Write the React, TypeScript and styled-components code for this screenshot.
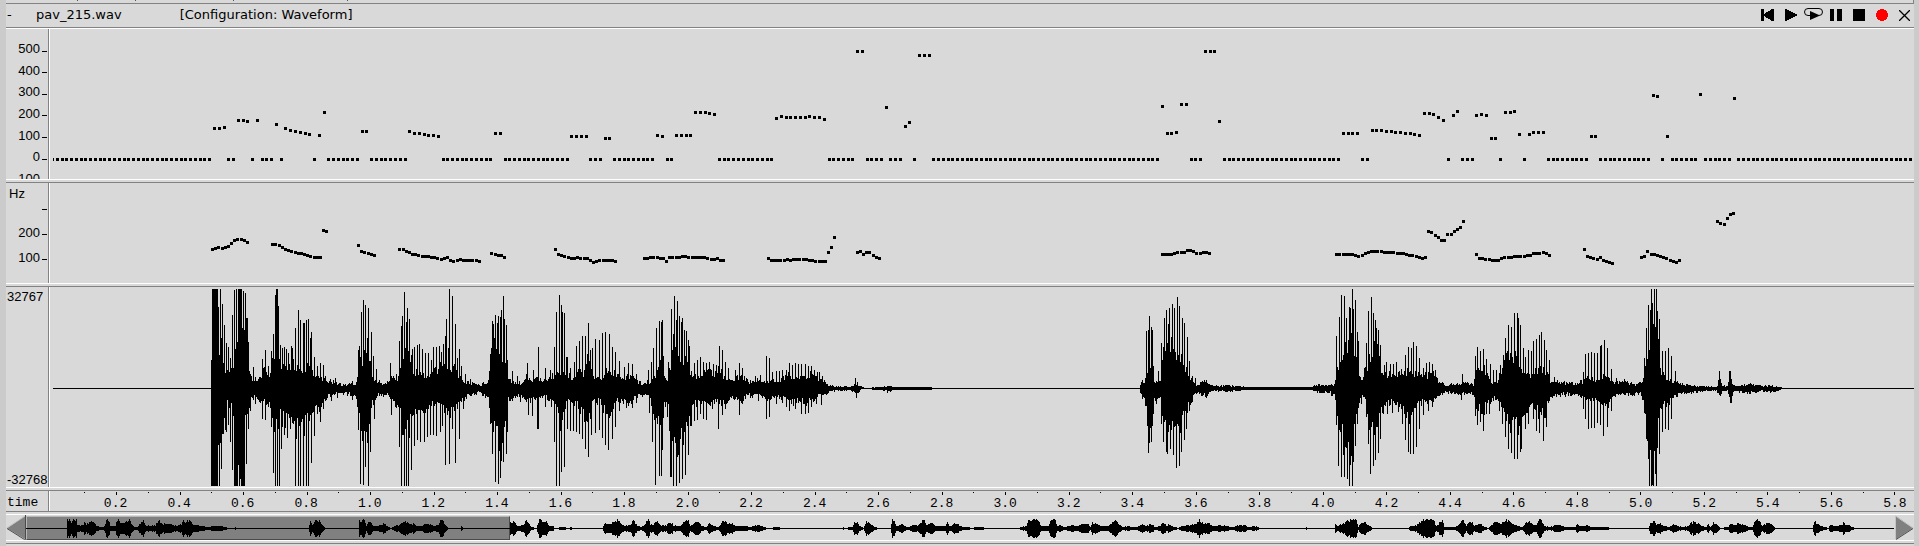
import React from "react";
import styled, { createGlobalStyle } from "styled-components";

const face = "#d9d9d9";
const shade = "#828282";
const light = "#ffffff";

const GlobalStyle = createGlobalStyle`
  * { box-sizing: border-box; }
  body { margin: 0; background: ${face}; color: #000; font: 13px/16px "Liberation Sans", Arial, sans-serif; }
`;

/* ---------- data ---------- */

type Run = [number, number[]];

/* Plots start at this abscissa; all data below is given on the same canvas scale. */
const ORIGIN = 50;
const PLOT_WIDTH = 1864;
const PX_PER_SECOND = 317.57;

const coarsePitch: Run[] = [
  [214, [128, 128, 127]], [238, [120, 120, 121]], [257, [120]], [276, [124]],
  [285, [128, 130, 131, 132, 133, 134]], [319, [135, 112]], [362, [131, 131]],
  [409, [131, 133, 133, 134, 135, 135, 136]], [495, [133, 133]], [571, [136, 136, 136, 136]],
  [605, [138, 138]], [657, [135, 136]], [676, [135, 135, 135, 135, 112, 112, 112, 113, 114]],
  [776, [118, 116, 117, 117, 117, 117, 117, 116, 117, 117, 119]], [857, [51, 51]], [886, [107]],
  [905, [126, 122]], [919, [55, 55, 55]], [1162, [106, 133, 133, 132]], [1181, [104, 104]],
  [1205, [51, 51, 51, 121]], [1343, [133, 133, 133, 133]],
  [1372, [130, 130, 130, 131, 131, 132, 132, 133, 133, 134, 135, 113, 113, 114, 117, 120]],
  [1453, [115, 111]], [1476, [115, 114, 115, 138, 138]], [1505, [112, 112, 111, 134]],
  [1529, [134, 132, 132, 132]], [1591, [136, 136]], [1653, [95, 96]], [1667, [136]],
  [1700, [94]], [1734, [98]],
];

const finePitch: Run[] = [
  [212, [249, 248, 247, 248, 247, 246, 243, 240, 239, 239, 240, 242]],
  [272, [244, 244, 245, 247, 249, 250, 251, 252, 253, 253, 254, 255, 256, 257, 257, 257]],
  [323, [230, 231]],
  [358, [245, 251, 252, 253, 254, 255]],
  [399, [249, 249, 251, 252, 254, 254, 255, 256, 256, 256, 257, 257, 258, 259, 258, 257, 260, 261, 260, 259, 260, 260, 260, 260, 260, 261]],
  [491, [253, 254, 255, 255, 257]],
  [555, [249, 254, 255, 256, 257, 258, 258, 257, 258, 258, 258, 260, 262, 261, 260, 260, 260, 260, 260, 261]],
  [644, [258, 258, 257, 257, 257, 258, 258, 261, 257, 257, 257, 257, 256, 256, 257, 257, 257, 257, 257, 257, 258, 259, 259, 258, 260, 260]],
  [768, [258, 260, 260, 260, 260, 260, 259, 260, 259, 259, 259, 259, 259, 260, 260, 261, 261, 261, 261, 252, 247, 237]],
  [857, [252, 251, 254, 252, 252, 255, 257, 258]],
  [1162, [254, 254, 254, 254, 253, 252, 252, 252, 250, 250, 251, 253, 253, 252, 252, 253]],
  [1336, [254, 254, 254, 254, 254, 254, 255, 256, 255, 253, 252, 251, 251, 251, 251, 252, 252, 252, 252, 253, 253, 253, 254, 255, 255, 256, 257, 258, 257, 231, 232, 235, 237, 240, 240, 234, 234, 231, 229, 227, 221]],
  [1476, [254, 258, 258, 259, 259, 260, 260, 260, 258, 257, 257, 257, 256, 256, 256, 256, 255, 255, 253, 253, 253, 252, 253, 255]],
  [1584, [249, 256, 257, 258, 259, 257, 260, 261, 262, 263]],
  [1641, [257, 256, 251, 254, 254, 255, 256, 257, 258, 260, 261, 262, 260]],
  [1717, [221, 223, 224, 218, 214, 213]],
];

/* Envelopes are "position:height" pairs. */
const bodyUp = "53:0 210:0 211:45 212:99 217:99 218:79 219:60 222:30 226:18 231:22 234:42 238:60 243:58 247:50 249:20 251:12 260:11 264:24 270:16 273:37 276:80 279:40 282:28 286:27 290:30 295:27 300:27 311:26 314:15 322:12 325:10 330:5 345:3 355:4 358:20 361:40 368:42 371:20 375:10 380:5 388:5 391:12 396:8 399:20 402:40 409:38 412:20 420:18 427:14 433:20 440:25 447:30 452:28 456:22 461:13 465:6 475:4 480:3 488:6 490:30 494:45 500:40 506:28 508:10 520:5 526:14 530:8 537:12 545:8 553:16 560:22 568:15 575:12 578:22 583:17 588:36 592:14 600:12 607:22 613:18 620:12 626:14 632:16 637:10 640:4 645:4 650:8 656:14 662:35 664:12 668:12 671:40 678:45 684:35 689:30 691:15 700:13 706:20 712:18 718:22 724:14 730:10 736:12 742:14 750:6 757:10 762:7 770:8 780:9 788:16 795:14 805:14 812:18 820:10 826:4 829:2 850:1 856:4 860:2 864:0 882:1 888:2 892:1 930:1 932:0 1139:0 1141:5 1145:8 1148:30 1152:32 1154:8 1160:8 1163:40 1168:52 1174:50 1180:40 1184:30 1187:16 1191:10 1196:4 1200:5 1206:5 1211:2 1230:2 1245:1 1310:1 1320:3 1328:3 1333:3 1335:8 1337:25 1340:40 1346:55 1352:60 1356:35 1358:18 1361:8 1365:20 1370:45 1376:50 1381:22 1385:18 1395:16 1402:16 1410:22 1420:18 1427:15 1435:20 1438:8 1444:2 1456:5 1460:2 1464:5 1473:3 1475:22 1482:26 1488:16 1492:6 1497:8 1500:20 1505:38 1512:38 1519:38 1523:22 1528:15 1533:16 1540:28 1546:22 1550:8 1560:5 1575:4 1582:6 1585:14 1595:10 1604:16 1610:10 1615:6 1625:6 1635:3 1640:4 1644:15 1648:50 1652:65 1657:60 1660:20 1666:12 1674:8 1680:4 1695:2 1716:1 1719:8 1722:2 1727:2 1730:14 1733:2 1740:2 1748:4 1760:2 1772:2 1780:1 1783:0 1913:0";
const bodyDown = "53:0 210:0 211:97 217:97 219:90 221:55 225:42 226:15 231:20 234:60 242:97 245:40 248:25 250:14 256:8 262:18 268:15 271:22 274:50 278:48 280:35 284:40 290:32 296:50 302:50 305:45 310:40 313:28 320:22 325:14 329:6 340:4 355:5 358:25 362:55 367:70 369:40 372:18 378:5 388:6 392:16 398:20 402:50 409:50 412:30 420:28 427:22 436:15 443:17 447:40 452:30 457:20 462:16 467:7 475:4 480:4 488:12 490:30 493:45 496:62 500:62 505:35 508:14 520:8 528:14 536:12 545:8 553:20 560:42 564:25 568:12 578:20 584:36 590:38 592:16 600:16 607:32 613:20 620:14 630:18 636:10 640:4 650:12 656:45 662:42 664:15 668:25 671:80 676:72 682:60 686:37 690:35 693:20 700:17 706:20 716:15 724:18 730:10 740:14 750:6 760:9 768:16 775:9 785:12 792:18 800:16 810:16 818:8 826:4 829:2 850:1 857:5 861:0 882:1 888:3 892:1 930:1 932:0 1139:0 1142:10 1146:20 1149:50 1152:40 1154:12 1160:12 1163:40 1168:50 1174:52 1179:55 1184:35 1188:20 1192:11 1198:4 1206:6 1211:2 1230:2 1245:1 1310:1 1320:3 1328:3 1334:6 1337:30 1342:60 1347:80 1352:70 1356:35 1359:15 1361:6 1366:16 1370:55 1376:50 1380:25 1384:20 1395:18 1402:20 1407:33 1414:34 1419:18 1425:15 1432:14 1438:8 1444:3 1458:4 1473:4 1475:22 1482:28 1488:18 1492:12 1497:10 1502:30 1508:45 1515:50 1520:40 1526:24 1532:20 1538:30 1545:28 1549:12 1556:6 1570:5 1582:10 1590:12 1600:15 1608:20 1614:8 1625:6 1640:4 1644:25 1648:60 1652:96 1656:75 1660:20 1666:20 1673:12 1680:4 1695:3 1716:1 1719:8 1722:2 1727:2 1730:22 1733:2 1748:4 1760:2 1772:3 1780:1 1783:0 1913:0";
const peaksUp = "220:99 221:50 222:84 224:63 226:45 228:41 230:30 232:73 234:98 236:99 238:99 239:99 240:99 241:99 243:97 245:95 246:70 247:70 248:46 253:21 262:29 265:38 268:22 271:37 273:54 275:93 276:99 277:99 278:82 280:43 282:40 284:41 286:39 288:35 291:42 292:40 295:60 298:78 300:68 303:65 304:65 306:68 308:69 310:50 311:56 314:31 317:22 320:25 323:23 325:12 330:9 333:8 335:10 352:7 358:38 359:42 361:76 363:88 365:83 367:50 368:80 371:56 373:32 376:19 390:25 393:12 396:14 399:47 401:62 402:72 404:96 406:66 407:80 409:69 411:33 412:39 414:41 417:43 419:44 422:39 425:35 428:35 431:28 433:41 436:41 439:42 441:36 443:44 445:52 446:69 448:40 449:99 452:92 455:64 457:30 459:39 461:22 465:14 470:9 490:34 491:40 492:67 493:64 494:50 495:73 497:65 498:72 500:71 501:78 503:92 504:69 506:63 507:28 512:17 517:12 527:25 533:18 538:41 545:20 550:18 554:41 556:76 559:93 561:83 562:76 564:75 566:31 567:31 570:20 574:26 576:42 579:47 582:52 585:52 588:65 590:38 592:40 595:49 599:48 602:55 605:56 609:54 612:41 615:36 619:27 624:21 628:25 632:24 636:14 640:7 648:18 651:26 653:40 656:60 659:67 661:66 662:68 663:32 668:26 671:79 673:54 674:92 676:68 677:87 679:72 681:66 682:70 684:58 686:57 688:48 689:42 691:17 694:25 697:28 700:31 703:26 706:25 709:26 713:24 716:23 719:42 722:38 725:26 728:20 735:18 739:25 742:20 746:10 755:12 760:13 766:32 769:30 772:16 776:17 779:17 782:18 786:18 789:25 792:23 795:25 798:24 801:24 805:24 808:22 811:22 814:18 817:16 819:16 822:12 825:6 830:3 855:10 857:6 1142:8 1145:10 1146:57 1148:58 1149:72 1151:61 1152:58 1153:22 1158:17 1161:45 1162:28 1164:70 1166:78 1168:64 1169:80 1172:84 1174:80 1177:91 1179:82 1182:70 1184:65 1187:51 1189:27 1192:12 1195:10 1200:6 1204:8 1206:8 1336:52 1339:71 1341:93 1344:92 1346:70 1349:81 1350:80 1352:99 1353:79 1355:88 1357:56 1358:47 1364:20 1366:45 1368:77 1371:91 1373:75 1375:68 1376:60 1378:58 1380:43 1384:23 1386:26 1390:24 1393:24 1396:26 1401:19 1405:33 1408:41 1411:40 1413:46 1416:42 1419:30 1423:20 1426:25 1429:26 1432:24 1435:18 1443:5 1462:14 1475:32 1477:41 1480:37 1483:39 1486:29 1490:24 1493:18 1496:18 1500:23 1503:33 1505:50 1508:63 1511:61 1514:75 1517:75 1518:70 1520:63 1523:40 1525:31 1528:38 1531:37 1533:47 1536:49 1539:53 1541:56 1544:48 1546:38 1549:28 1554:11 1583:16 1585:34 1588:35 1591:36 1594:35 1597:35 1600:42 1601:43 1604:48 1607:40 1611:19 1616:10 1644:30 1646:60 1648:83 1650:78 1651:99 1652:85 1654:99 1656:99 1657:77 1659:69 1662:37 1665:37 1668:40 1671:32 1675:17 1719:17 1729:17 1730:17";
const peaksDown = "219:98 221:80 223:45 226:43 228:36 230:53 232:81 234:97 235:97 236:97 237:97 239:97 241:97 242:97 243:97 244:97 246:75 248:40 250:22 255:15 257:10 262:30 265:31 268:18 271:38 273:84 275:97 277:97 279:97 281:60 284:46 287:49 290:40 292:34 295:97 298:97 300:97 303:97 306:97 308:97 311:74 314:47 317:25 320:33 323:20 331:12 337:9 352:11 358:41 360:95 363:96 365:78 368:97 370:63 374:30 391:26 395:12 399:58 401:97 404:97 406:97 408:97 411:81 414:57 417:51 420:53 424:53 427:48 430:46 433:46 436:47 440:43 442:37 445:76 449:75 452:40 455:74 459:50 463:20 466:10 490:35 492:65 495:93 498:95 500:89 501:72 503:73 506:65 507:43 520:13 528:26 532:27 537:40 538:40 545:18 551:18 554:53 556:98 559:98 561:83 564:78 567:40 570:42 573:42 576:43 579:45 582:50 585:60 588:68 591:46 595:44 599:41 602:49 605:56 608:61 612:50 615:38 619:22 626:19 632:19 636:14 642:8 649:24 652:53 655:96 659:87 661:87 662:61 667:28 670:88 671:88 673:98 676:98 679:94 682:90 685:86 688:66 691:37 694:32 697:31 700:25 703:30 706:31 712:20 718:40 722:26 725:20 739:26 742:15 752:9 758:12 766:30 769:28 776:15 782:14 786:18 789:22 795:20 801:25 805:25 808:24 811:18 816:15 821:16 826:6 856:9 1147:37 1148:64 1149:54 1151:53 1153:18 1156:15 1161:35 1163:53 1166:63 1167:65 1170:60 1173:66 1176:79 1179:77 1181:63 1184:51 1186:40 1189:22 1192:13 1336:36 1338:77 1341:88 1344:88 1347:90 1349:97 1352:97 1353:73 1355:57 1357:35 1361:15 1366:28 1368:55 1370:85 1373:77 1375:71 1378:64 1380:50 1383:25 1387:25 1392:24 1398:23 1402:35 1405:51 1408:63 1410:65 1413:65 1416:58 1419:40 1423:26 1428:22 1432:18 1461:11 1475:27 1477:36 1480:33 1483:42 1486:25 1489:25 1499:22 1502:35 1505:48 1508:60 1511:64 1514:70 1517:70 1520:63 1521:60 1525:40 1528:35 1533:30 1536:42 1539:44 1543:52 1546:38 1583:20 1585:30 1588:40 1591:39 1594:39 1597:34 1600:36 1603:47 1607:38 1611:22 1646:50 1648:70 1649:97 1651:97 1653:97 1655:85 1656:97 1659:65 1662:43 1665:40 1668:41 1671:30";
const overview = "26:0 66:0 67:9 70:8 71:5 73:9 76:9 77:4 80:2 82:3 84:6 86:4 88:5 90:7 93:6 96:3 100:1 104:2 106:8 108:8 110:2 115:2 117:9 119:8 120:5 124:5 127:7 129:8 131:4 134:1 138:2 141:6 143:7 145:3 150:2 155:3 158:8 160:6 163:4 167:5 172:3 177:2 181:4 183:7 185:5 187:8 190:7 193:3 200:3 206:1 212:2 220:2 226:1 228:0 234:0 235:1 236:0 308:0 310:6 312:3 315:7 319:7 321:4 325:0 358:0 359:7 361:8 364:8 366:3 369:7 372:3 376:2 380:3 384:5 387:2 390:0 395:2 398:3 401:4 405:7 408:5 413:4 417:2 421:2 425:4 429:4 433:2 438:3 440:9 442:8 445:3 448:0 460:0 461:2 463:0 509:0 510:6 513:7 516:3 520:2 524:4 526:8 528:6 531:1 536:0 539:9 541:8 543:6 546:6 549:2 553:2 554:0 563:1 568:0 571:1 573:0 602:0 604:5 610:5 614:6 617:9 620:5 624:2 630:3 633:9 635:4 640:1 644:3 648:9 650:3 653:4 657:7 660:3 666:3 670:6 673:3 680:2 683:6 686:8 688:8 690:2 693:4 695:7 698:6 701:2 706:1 709:5 712:3 716:1 719:2 722:7 727:5 733:4 737:2 745:2 750:1 757:3 760:3 764:1 767:0 778:1 781:0 842:0 843:1 845:0 850:1 852:1 854:5 857:6 859:2 863:0 866:6 869:5 873:2 877:0 890:0 892:9 894:9 896:2 902:4 906:1 913:3 917:3 921:6 924:9 926:3 929:4 932:6 935:2 940:2 944:2 947:5 950:2 954:5 958:4 960:2 962:1 968:1 972:0 974:1 983:1 984:0 1019:0 1020:1 1026:2 1028:8 1032:9 1036:9 1039:6 1041:2 1048:2 1051:8 1055:8 1057:2 1060:3 1065:1 1070:3 1078:2 1082:4 1088:4 1090:1 1092:5 1095:5 1100:2 1108:2 1111:5 1115:8 1118:5 1122:1 1128:2 1136:1 1142:4 1146:2 1151:4 1155:1 1160:2 1163:6 1166:2 1168:4 1175:1 1178:0 1181:2 1190:3 1196:4 1199:9 1202:5 1208:5 1212:2 1220:3 1226:2 1232:1 1240:3 1244:3 1248:1 1256:2 1260:0 1305:0 1306:1 1307:0 1334:0 1335:5 1337:2 1341:4 1347:7 1352:9 1356:8 1358:1 1361:6 1364:6 1369:2 1373:0 1408:0 1410:2 1416:3 1421:7 1425:9 1433:9 1435:3 1438:3 1440:8 1442:8 1444:1 1450:1 1455:1 1459:5 1463:8 1466:3 1469:6 1472:6 1474:2 1480:4 1484:1 1488:0 1492:4 1495:6 1497:7 1500:4 1505:9 1509:6 1512:4 1517:2 1522:1 1526:6 1529:7 1533:3 1536:3 1539:9 1541:8 1544:2 1550:1 1557:4 1561:2 1568:1 1575:1 1577:4 1580:2 1587:3 1592:1 1600:1 1606:1 1610:0 1648:0 1650:5 1653:8 1656:3 1660:5 1664:2 1668:1 1673:4 1677:2 1683:1 1687:2 1691:5 1694:7 1700:3 1704:1 1706:1 1708:4 1710:1 1713:5 1716:4 1720:0 1728:1 1730:4 1735:3 1738:5 1742:4 1747:2 1752:1 1755:7 1758:9 1762:2 1767:5 1771:4 1775:0 1812:0 1814:8 1816:4 1821:2 1828:0 1830:4 1834:2 1838:2 1843:5 1848:3 1855:0 1893:0";

/* ---------- drawing helpers ---------- */

const parse = (text: string) => text.split(" ").map((pair) => pair.split(":").map(Number));

function interpolate(text: string) {
  const points = parse(text);
  const heights = new Map<number, number>();
  for (let i = 0; i + 1 < points.length; i++) {
    const [x0, h0] = points[i];
    const [x1, h1] = points[i + 1];
    for (let x = x0; x <= x1; x++) heights.set(x, h0 + ((h1 - h0) * (x - x0)) / (x1 - x0));
  }
  return heights;
}

/* Repeatable ripple so that the envelope keeps the ragged edge of sampled speech. */
const ripple = (x: number, seed: number) => {
  const s = Math.sin(x * 12.9898 + seed) * 43758.5453;
  return s - Math.floor(s);
};

function side(body: string, peaks: string, limit: number, seed: number) {
  const heights = interpolate(body);
  heights.forEach((h, x) => {
    if (h < 96) heights.set(x, h * (h > 6 ? 0.55 + 0.5 * ripple(x, seed) : 0.6 + 0.9 * ripple(x, seed)));
  });
  parse(peaks).forEach(([x, h]) => heights.set(x, Math.max(h, heights.get(x) ?? 0)));
  heights.forEach((h, x) => heights.set(x, Math.min(limit, Math.round(h))));
  return heights;
}

function columns(up: Map<number, number>, down: Map<number, number>, left: number, middle: number) {
  let d = "";
  up.forEach((h, x) => {
    const low = down.get(x) ?? 0;
    d += `M${x - left} ${middle - h}h1v${h + low + 1}h-1z`;
  });
  return d;
}

function dots(runs: Run[], start: number, step: number, top: number, rest?: number) {
  const values = new Map<number, number>();
  runs.forEach(([x, ys]) => {
    const first = Math.round((x + 0.5 - start) / step);
    ys.forEach((y, i) => values.set(first + i, y));
  });
  if (rest !== undefined) {
    for (let n = 1; n <= 390; n++) if (!values.has(n)) values.set(n, rest);
  }
  let d = "";
  values.forEach((y, n) => {
    const x = Math.floor(start + step * n);
    d += `M${x - 1 - ORIGIN} ${y - 1 - top}h3v3h-3z`;
  });
  return d;
}

const coarsePath = dots(coarsePitch, 52.55, 4.7635, 29, 159) + "M3 129h1v3h-1z";
const finePath = dots(finePitch, 53.7, 3.1757, 183);
const wavePath = columns(side(bodyUp, peaksUp, 99, 1), side(bodyDown, peaksDown, 97, 7), ORIGIN, 101);
const mini = interpolate(overview);
mini.forEach((h, x) => mini.set(x, Math.min(9, Math.round(h * (0.75 + 0.4 * ripple(x, 3))))));
const overviewPath = columns(mini, mini, 26, 13);

let tickPath = "";
for (let i = 1; i <= 58; i++) {
  tickPath += `M${Math.floor(3 + (PX_PER_SECOND * i) / 10)} 1h1v${i % 2 ? 1 : 3}h-1z`;
}

/* ---------- layout ---------- */

const Page = styled.main`
  padding: 0 5px 0 6px;
  background: #cbcbcb;
`;

const Frame = styled.div`
  background: ${face};
`;

const MenuRemnant = styled.div`
  height: 4px;
  border-right: 1px solid ${shade};
  border-bottom: 1px solid ${shade};
  svg { display: block; }
`;

const Header = styled.header`
  display: flex;
  align-items: center;
  height: 23px;
  padding-bottom: 1px;
  font-family: "DejaVu Sans", sans-serif;
`;

const FileTitle = styled.h1`
  flex: 1;
  display: flex;
  gap: 58px;
  margin: 0;
  font-size: 13px;
  line-height: 16px;
  font-weight: 400;
  white-space: pre;
`;

const CollapseButton = styled.button`
  width: 30px;
  padding: 0 0 0 1px;
  border: 0;
  background: none;
  color: inherit;
  font: inherit;
  font-size: 13px;
  text-align: left;
`;

const Transport = styled.div`
  display: flex;
  align-items: center;
  gap: 3px;
`;

const TransportButton = styled.button<{ $wide?: boolean }>`
  padding: 0 ${(p) => (p.$wide ? 0 : 4)}px;
  border: 0;
  background: none;
  svg { display: block; }
`;

const Groove = styled.div`
  height: 2px;
  border-top: 1px solid ${shade};
  border-bottom: 1px solid ${light};
`;

const Sash = styled.div<{ $inverse?: boolean }>`
  height: 4px;
  border-top: 1px solid ${(p) => (p.$inverse ? shade : light)};
  border-bottom: 1px solid ${(p) => (p.$inverse ? light : shade)};
`;

const Pane = styled.section<{ $height: number }>`
  display: flex;
  height: ${(p) => p.$height}px;
  overflow: hidden;
`;

const Axis = styled.div`
  flex: 0 0 43px;
  display: flex;
  flex-direction: column;
  border-right: 1px solid ${shade};
`;

const Plot = styled.div`
  flex: 1;
  min-width: 0;
  border-left: 1px solid ${light};
  overflow: hidden;
`;

const Drawing = styled.svg`
  display: block;
  width: 100%;
  height: 100%;
  shape-rendering: crispEdges;
`;

const Scale = styled.div`
  flex: 0 0 146px;
  display: flex;
  flex-direction: column;
  justify-content: space-between;
  margin-top: 14px;
`;

const ScaleRow = styled.div<{ $height: number }>`
  flex: 0 0 ${(p) => p.$height}px;
  display: flex;
  align-items: center;
  justify-content: flex-end;
  gap: 2px;
  padding-right: 1px;
  line-height: 12px;
  span { padding-bottom: 4px; }
  &::after { content: ""; width: 5px; height: 1px; background: #000; }
`;

const UnitLabel = styled.div`
  height: 14px;
  padding-left: 3px;
  line-height: 22px;
`;

const RangeLabels = styled.div`
  flex: 1;
  display: flex;
  flex-direction: column;
  justify-content: space-between;
  padding: 3px 0 0 1px;
  line-height: 14px;
`;

const TimeLabel = styled.div`
  padding: 4px 0 0 1px;
  line-height: 16px;
  font-family: "Liberation Mono", monospace;
`;

const Ruler = styled.div`
  display: grid;
  height: 100%;
  > * { grid-area: 1 / 1; }
`;

const RulerLabels = styled.div`
  display: flex;
  margin-left: 2px;
  padding: 4px 0 0 calc(100% * 0.1 / 5.86);
  overflow: hidden;
  font-family: "Liberation Mono", monospace;
  span {
    flex: 0 0 calc(100% * 0.2 / 5.76);
    padding-top: 1px;
    text-align: center;
    line-height: 16px;
  }
`;

const ScrollBar = styled.div`
  display: flex;
  height: 25px;
`;

const ArrowButton = styled.button`
  flex: 0 0 auto;
  padding: 0;
  border: 0;
  background: none;
  svg { display: block; }
`;

const Track = styled.div`
  flex: 1;
  min-width: 0;
  display: grid;
  > * { grid-area: 1 / 1; }
`;

const Thumb = styled.div`
  width: 25.9%;
  margin-top: 1px;
  border: 1px solid;
  border-color: #b8b8b8 #4a4a4a #4a4a4a #b8b8b8;
  background: #808080;
`;

const Foot = styled.div`
  height: 2px;
`;

export default function App() {
  return (
    <>
      <GlobalStyle />
      <Page>
        <Frame>
          <MenuRemnant>
            <svg width="360" height="3" shapeRendering="crispEdges">
              <path d="M71 0h1v1h-1zM129 0h1v1h-1zM227 0h1v1h-1zM341 0h1v1h-1z" fill="#555" />
            </svg>
          </MenuRemnant>
          <Header>
            <CollapseButton aria-label="Collapse">-</CollapseButton>
            <FileTitle>
              <span>pav_215.wav</span>
              <span>[Configuration: Waveform]</span>
            </FileTitle>
            <Transport>
              <TransportButton aria-label="Go to start">
                <svg width="13" height="12" shapeRendering="crispEdges">
                  <path d="M0 0h3v5l8-5h2v12h-2l-8-5v5h-3z" />
                </svg>
              </TransportButton>
              <TransportButton aria-label="Play">
                <svg width="12" height="12" shapeRendering="crispEdges">
                  <path d="M0 0h1l11 5.500v1l-11 5.500h-1z" />
                </svg>
              </TransportButton>
              <TransportButton aria-label="Play loop" $wide>
                <svg width="19" height="14">
                  <path d="M6 7.500H4A3.500 3.500 0 0 1 4 .5H15A3.500 3.500 0 0 1 15 7.500H13" fill="none" stroke="#000" />
                  <path d="M6 3l9 4v1l-9 4z" />
                </svg>
              </TransportButton>
              <TransportButton aria-label="Pause">
                <svg width="12" height="12" shapeRendering="crispEdges">
                  <path d="M0 0h4v12h-4zM7 0h5v12h-5z" />
                </svg>
              </TransportButton>
              <TransportButton aria-label="Stop">
                <svg width="12" height="12" shapeRendering="crispEdges">
                  <path d="M0 0h12v12h-12z" />
                </svg>
              </TransportButton>
              <TransportButton aria-label="Record">
                <svg width="12" height="12" shapeRendering="crispEdges">
                  <circle cx="6" cy="6" r="6" fill="#f00" />
                </svg>
              </TransportButton>
              <TransportButton aria-label="Close">
                <svg width="11" height="11">
                  <path d="M0 0l11 11M11 0l-11 11" stroke="#000" strokeWidth="1.300" />
                </svg>
              </TransportButton>
            </Transport>
          </Header>
          <Groove />

          <Pane $height={150} aria-label="Pitch data">
            <Axis>
              <Scale>
                {[500, 400, 300, 200, 100, 0, -100].map((value) => (
                  <ScaleRow key={value} $height={16}>
                    <span>{value}</span>
                  </ScaleRow>
                ))}
              </Scale>
            </Axis>
            <Plot>
              <Drawing viewBox={`0 0 ${PLOT_WIDTH} 150`} preserveAspectRatio="none">
                <path d={coarsePath} />
              </Drawing>
            </Plot>
          </Pane>
          <Sash />

          <Pane $height={100} aria-label="Pitch contour">
            <Axis>
              <UnitLabel>Hz</UnitLabel>
              <ScaleRow $height={25} />
              <ScaleRow $height={25}>
                <span>200</span>
              </ScaleRow>
              <ScaleRow $height={25}>
                <span>100</span>
              </ScaleRow>
            </Axis>
            <Plot>
              <Drawing viewBox={`0 0 ${PLOT_WIDTH} 100`} preserveAspectRatio="none">
                <path d={finePath} />
              </Drawing>
            </Plot>
          </Pane>
          <Sash />

          <Pane $height={200} aria-label="Waveform">
            <Axis>
              <RangeLabels>
                <span>32767</span>
                <span>-32768</span>
              </RangeLabels>
            </Axis>
            <Plot>
              <Drawing viewBox={`0 0 ${PLOT_WIDTH} 200`} preserveAspectRatio="none">
                <path d={wavePath} />
              </Drawing>
            </Plot>
          </Pane>
          <Sash />

          <Pane $height={20} aria-label="Time axis">
            <Axis>
              <TimeLabel>time</TimeLabel>
            </Axis>
            <Plot>
              <Ruler>
                <Drawing viewBox={`0 0 ${PLOT_WIDTH} 20`} preserveAspectRatio="none">
                  <path d={tickPath} />
                </Drawing>
                <RulerLabels>
                  {Array.from({ length: 29 }, (_, i) => (
                    <span key={i}>{((i + 1) / 5).toFixed(1)}</span>
                  ))}
                </RulerLabels>
              </Ruler>
            </Plot>
          </Pane>
          <Sash $inverse />

          <ScrollBar>
            <ArrowButton aria-label="Scroll left">
              <svg width="20" height="25">
                <path d="M19 1v23L1 13z" fill="#808080" />
                <path d="M1 13L19 1" stroke="#c4c4c4" fill="none" />
                <path d="M1 13.500L18.500 24.500H19.500V0" stroke="#4a4a4a" fill="none" />
              </svg>
            </ArrowButton>
            <Track>
              <Thumb role="scrollbar" aria-orientation="horizontal" aria-valuenow={0} aria-controls="root" />
              <Drawing viewBox="0 0 1869 25" preserveAspectRatio="none">
                <path d={overviewPath} />
              </Drawing>
            </Track>
            <ArrowButton aria-label="Scroll right">
              <svg width="19" height="25">
                <path d="M1 1v23L18 13z" fill="#808080" />
                <path d="M.5 24V1L18 13" stroke="#c4c4c4" fill="none" />
                <path d="M1 24.500L18 13.500" stroke="#4a4a4a" fill="none" />
              </svg>
            </ArrowButton>
          </ScrollBar>
          <Sash />
          <Foot />
        </Frame>
      </Page>
    </>
  );
}
